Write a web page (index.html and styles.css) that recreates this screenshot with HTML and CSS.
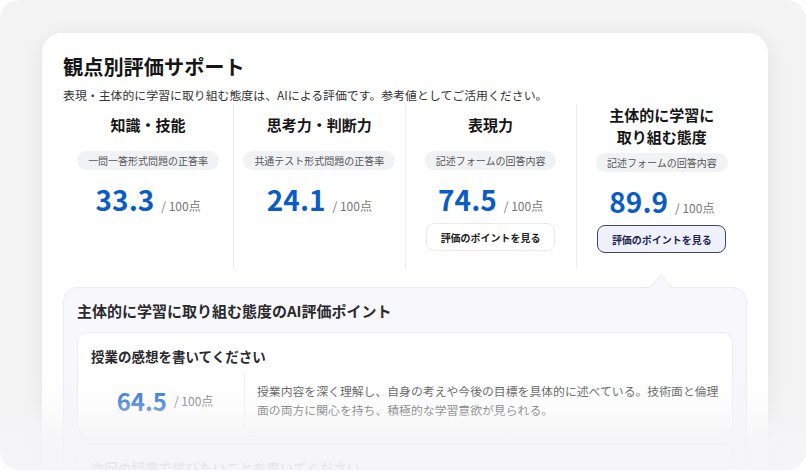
FILE: index.html
```html
<!DOCTYPE html>
<html lang="ja">
<head>
<meta charset="utf-8">
<link rel="stylesheet" href="styles.css">
</head>
<body>
<div class="frame">
  <div class="card">
    <h1 class="title">観点別評価サポート</h1>
    <p class="subtitle">表現・主体的に学習に取り組む態度は、AIによる評価です。参考値としてご活用ください。</p>
    <div class="cols">
      <div class="col">
        <div class="col-head">知識・技能</div>
        <div class="pill">一問一答形式問題の正答率</div>
        <div class="score"><span class="num">33.3</span><span class="max">/ 100点</span></div>
      </div>
      <div class="col">
        <div class="col-head">思考力・判断力</div>
        <div class="pill">共通テスト形式問題の正答率</div>
        <div class="score"><span class="num">24.1</span><span class="max">/ 100点</span></div>
      </div>
      <div class="col">
        <div class="col-head">表現力</div>
        <div class="pill">記述フォームの回答内容</div>
        <div class="score"><span class="num">74.5</span><span class="max">/ 100点</span></div>
        <button class="btn">評価のポイントを見る</button>
      </div>
      <div class="col col-active">
        <div class="col-head">主体的に学習に<br>取り組む態度</div>
        <div class="pill">記述フォームの回答内容</div>
        <div class="score"><span class="num">89.9</span><span class="max">/ 100点</span></div>
        <button class="btn btn-active">評価のポイントを見る</button>
      </div>
    </div>
    <div class="panel">
      <div class="panel-title">主体的に学習に取り組む態度のAI評価ポイント</div>
      <div class="item">
        <div class="item-q">授業の感想を書いてください</div>
        <div class="item-row">
          <div class="item-score"><span class="num-s">64.5</span><span class="max">/ 100点</span></div>
          <div class="item-text">授業内容を深く理解し、自身の考えや今後の目標を具体的に述べている。技術面と倫理面の両方に関心を持ち、積極的な学習意欲が見られる。</div>
        </div>
      </div>
      <div class="item">
        <div class="item-q">次回の授業で学びたいことを書いてください</div>
      </div>
    </div>
  </div>
  <div class="fade"></div>
</div>
</body>
</html>
```

FILE: styles.css
```css
* { box-sizing: border-box; }
html, body { margin: 0; padding: 0; background: #ffffff; }
body {
  font-family: "Noto Sans CJK JP", "Noto Sans", sans-serif;
  color: #1a1a1a;
}
.frame {
  position: relative;
  width: 806px;
  height: 470px;
  background: #f3f3f4;
  border-radius: 20px;
  overflow: hidden;
  padding: 33px 0 0 42px;
}
.card {
  width: 726px;
  height: 520px;
  background: #ffffff;
  border-radius: 20px;
  box-shadow: 0 4px 22px rgba(0, 0, 0, 0.07);
  padding: 20px 21px 0;
}
.title {
  margin: 0;
  font-size: 20.2px;
  line-height: 28px;
  font-weight: 700;
  color: #161616;
}
.subtitle {
  margin: 5px 0 0;
  font-size: 11.9px;
  line-height: 18px;
  color: #333333;
}
.cols {
  display: flex;
}
.col {
  flex: 1;
  display: flex;
  flex-direction: column;
  align-items: center;
  padding-bottom: 13px;
  min-height: 165px;
}
.col + .col { border-left: 1px solid #ececee; }
.col-head {
  min-height: 43px;
  display: flex;
  align-items: center;
  justify-content: center;
  text-align: center;
  font-size: 15px;
  line-height: 22px;
  font-weight: 700;
  color: #161616;
  margin-top: -1px;
}
.col-active .col-head { min-height: 45px; }
.pill {
  margin-top: 5px;
  height: 19px;
  line-height: 19px;
  padding: 0 11px;
  border-radius: 10px;
  background: #f1f2f4;
  font-size: 10px;
  color: #555555;
}
.score {
  margin-top: 12px;
  display: flex;
  align-items: baseline;
  height: 34px;
}
.num {
  font-size: 28px;
  line-height: 34px;
  font-weight: 700;
  color: #0b5cc6;
}
.max {
  margin-left: 7px;
  font-size: 12px;
  color: #777777;
}
.btn {
  margin-top: 7px;
  width: 129px;
  height: 28px;
  border: 1px solid #e9e9ed;
  border-radius: 8px;
  background: #ffffff;
  font-family: inherit;
  font-size: 10px;
  font-weight: 700;
  color: #222222;
  padding: 0;
}
.btn-active {
  background: #eef0fa;
  border-color: #3d4672;
  color: #1d2654;
}
.panel {
  position: relative;
  margin-top: 18px;
  background: #f8f8fc;
  border: 1px solid #ebebf4;
  border-radius: 14px;
  padding: 12px 13px 10px;
}
.panel::before {
  content: "";
  position: absolute;
  top: -14px;
  left: 585px;
  width: 0;
  height: 0;
  border-left: 12px solid transparent;
  border-right: 12px solid transparent;
  border-bottom: 14px solid #ebebf4;
}
.panel::after {
  content: "";
  position: absolute;
  top: -13px;
  left: 586px;
  width: 0;
  height: 0;
  border-left: 11px solid transparent;
  border-right: 11px solid transparent;
  border-bottom: 14px solid #f8f8fc;
}
.panel-title {
  font-size: 15px;
  line-height: 22px;
  font-weight: 700;
  color: #2a2a2e;
}
.item {
  margin-top: 10px;
  background: #ffffff;
  border: 1px solid #ececf1;
  border-radius: 10px;
  padding: 12px 6px 8px 0;
}
.item + .item { margin-top: 8px; }
.item-q {
  padding-left: 13px;
  font-size: 13.5px;
  line-height: 22px;
  font-weight: 700;
  color: #2a2a2e;
}
.item-row {
  display: flex;
  margin-top: 6px;
}
.item-score {
  width: 167px;
  min-height: 54px;
  border-right: 1px solid #eeeef2;
  display: flex;
  align-items: center;
  justify-content: center;
  padding-left: 8px;
}
.num-s {
  font-size: 24px;
  font-weight: 700;
  color: #2b70d0;
}
.item-text {
  flex: 1;
  padding-left: 12px;
  display: flex;
  align-items: center;
  font-size: 11.85px;
  line-height: 19px;
  color: #555555;
}
.fade {
  position: absolute;
  left: 0;
  right: 0;
  bottom: 0;
  height: 100px;
  background: linear-gradient(to bottom,
    rgba(245, 245, 247, 0) 0%,
    rgba(245, 245, 247, 0.2) 30%,
    rgba(245, 245, 247, 0.85) 68%,
    rgba(245, 245, 247, 0.95) 100%);
}
```
